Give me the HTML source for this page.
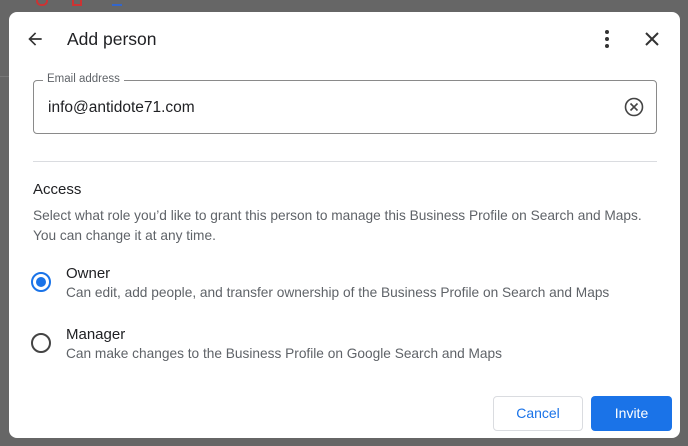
<!DOCTYPE html>
<html><head><style>
body{margin:0;width:688px;height:446px;background:#666;position:relative;overflow:hidden;font-family:"Liberation Sans",sans-serif;}
.bgline{position:absolute;left:0;top:76px;width:9px;height:1px;background:#777}
.dlg{position:absolute;left:9px;top:12px;width:671px;height:426px;background:#fff;border-radius:8px;}
.t{position:absolute;white-space:nowrap;}
</style></head><body>
<div class="bgline"></div>
<div style="position:absolute;left:36px;top:0;width:8px;height:4px;border:2px solid #c33;border-top:none;border-radius:0 0 5px 5px"></div>
<div style="position:absolute;left:72px;top:0;width:6px;height:4px;border:2px solid #c33;border-top:none"></div>
<div style="position:absolute;left:112px;top:0;width:10px;height:4px;border-bottom:2px solid #36c"></div>
<div class="dlg">
<svg style="position:absolute;left:16px;top:17px" width="20" height="20" viewBox="0 0 24 24"><path d="M20 11H7.8l5.6-5.6L12 4l-8 8 8 8 1.4-1.4L7.8 13H20z" fill="#333"/></svg>
<div class="t" style="left:58px;top:17px;font-size:17.5px;color:#202124">Add person</div>
<svg style="position:absolute;left:590px;top:17px" width="16" height="20" viewBox="0 0 16 20"><circle cx="8" cy="3" r="2" fill="#333"/><circle cx="8" cy="10" r="2" fill="#333"/><circle cx="8" cy="17" r="2" fill="#333"/></svg>
<svg style="position:absolute;left:635px;top:19px" width="16" height="16" viewBox="0 0 16 16"><path d="M2 2L14 14M14 2L2 14" stroke="#333" stroke-width="2"/></svg>
<div style="position:absolute;left:24px;top:68px;width:622px;height:52px;border:1px solid #8a8a8a;border-radius:4px"></div>
<div class="t" style="left:34px;top:61px;padding:0 4px;background:#fff;font-size:11.5px;color:#5f6368">Email address</div>
<div class="t" style="left:39px;top:87px;font-size:15.5px;color:#202124">info@antidote71.com</div>
<svg style="position:absolute;left:615px;top:85px" width="20" height="20" viewBox="0 0 20 20"><circle cx="10" cy="10" r="8.5" fill="none" stroke="#444" stroke-width="1.6"/><path d="M6.5 6.5L13.5 13.5M13.5 6.5L6.5 13.5" stroke="#444" stroke-width="1.6"/></svg>
<div style="position:absolute;left:24px;top:149px;width:624px;height:1px;background:#dadce0"></div>
<div class="t" style="left:24px;top:169px;font-size:15px;color:#202124">Access</div>
<div class="t" style="left:24px;top:194px;font-size:13.7px;line-height:20px;color:#5f6368">Select what role you’d like to grant this person to manage this Business Profile on Search and Maps.<br>You can change it at any time.</div>
<div style="position:absolute;left:22px;top:260px;width:16px;height:16px;border:2px solid #1a73e8;border-radius:50%"></div>
<div style="position:absolute;left:27px;top:265px;width:10px;height:10px;background:#1a73e8;border-radius:50%"></div>
<div class="t" style="left:57px;top:253px;font-size:15px;color:#202124">Owner</div>
<div class="t" style="left:57px;top:273px;font-size:13.7px;color:#5f6368">Can edit, add people, and transfer ownership of the Business Profile on Search and Maps</div>
<div style="position:absolute;left:22px;top:321px;width:16px;height:16px;border:2px solid #444;border-radius:50%"></div>
<div class="t" style="left:57px;top:314px;font-size:15px;color:#202124">Manager</div>
<div class="t" style="left:57px;top:334px;font-size:13.7px;color:#5f6368">Can make changes to the Business Profile on Google Search and Maps</div>
<div style="position:absolute;left:484px;top:384px;width:88px;height:33px;border:1px solid #dadce0;border-radius:4px;color:#1a73e8;font-size:14px;text-align:center;line-height:33px">Cancel</div>
<div style="position:absolute;left:582px;top:384px;width:81px;height:35px;background:#1a73e8;border-radius:4px;color:#fff;font-size:14px;text-align:center;line-height:35px">Invite</div>
</div>
</body></html>
